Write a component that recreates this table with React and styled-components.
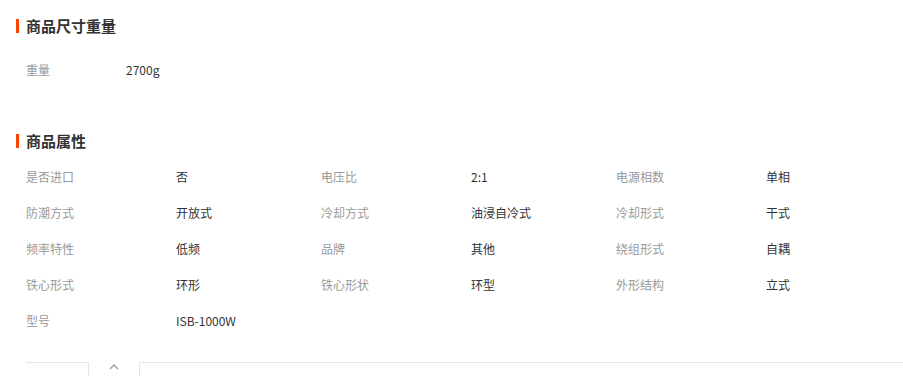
import React from 'react';
import { styled, createGlobalStyle } from 'styled-components';

const GlobalStyle = createGlobalStyle`
  body {
    margin: 0;
    background: #fff;
    font-family: "Microsoft YaHei", "Noto Sans CJK SC", "Liberation Sans", sans-serif;
    color: #333;
  }
`;

const Page = styled.div`
  padding: 19px 0 0 16px;
  overflow: hidden;
`;

const SectionTitle = styled.h3`
  margin: ${(p) => p.$top || 0}px 0 0;
  height: 14px;
  line-height: 14px;
  border-left: 3px solid #ff4400;
  padding-left: 7px;
  font-size: 15px;
  font-weight: bold;
  color: #333;
`;

const SpecRow = styled.div`
  display: flex;
  padding-left: 10px;
  margin-top: 19px;
  line-height: 36px;
  font-size: 12px;
`;

const Label = styled.span`
  width: ${(p) => p.$w}px;
  flex-shrink: 0;
  color: #999;
`;

const Value = styled.span`
  color: #333;
`;

const AttrGrid = styled.div`
  display: grid;
  grid-template-columns: repeat(3, 295px);
  padding-left: 10px;
  margin-top: 11px;
  font-size: 12px;
  line-height: 36px;
`;

const AttrItem = styled.div`
  display: flex;
`;

const Footer = styled.div`
  margin: 23px 0 0 10px;
  border-top: 1px solid #e5e5e5;
  height: 30px;
  padding-left: 62px;
`;

const Tab = styled.div`
  width: 52px;
  height: 30px;
  margin-top: -1px;
  background: #fff;
  border-left: 1px solid #e5e5e5;
  border-right: 1px solid #e5e5e5;
  display: flex;
  justify-content: center;
  padding-top: 2px;
  box-sizing: border-box;
`;

const attrs = [
  ['是否进口', '否'],
  ['电压比', '2:1'],
  ['电源相数', '单相'],
  ['防潮方式', '开放式'],
  ['冷却方式', '油浸自冷式'],
  ['冷却形式', '干式'],
  ['频率特性', '低频'],
  ['品牌', '其他'],
  ['绕组形式', '自耦'],
  ['铁心形式', '环形'],
  ['铁心形状', '环型'],
  ['外形结构', '立式'],
  ['型号', 'ISB-1000W'],
];

export default function App() {
  return (
    <Page>
      <GlobalStyle />
      <SectionTitle>商品尺寸重量</SectionTitle>
      <SpecRow>
        <Label $w={100}>重量</Label>
        <Value>2700g</Value>
      </SpecRow>
      <SectionTitle $top={46}>商品属性</SectionTitle>
      <AttrGrid>
        {attrs.map(([k, v]) => (
          <AttrItem key={k}>
            <Label $w={150}>{k}</Label>
            <Value>{v}</Value>
          </AttrItem>
        ))}
      </AttrGrid>
      <Footer>
        <Tab>
          <svg width="10" height="6" viewBox="0 0 10 6">
            <path d="M1 5 L5 1 L9 5" fill="none" stroke="#999" strokeWidth="1.3" />
          </svg>
        </Tab>
      </Footer>
    </Page>
  );
}
